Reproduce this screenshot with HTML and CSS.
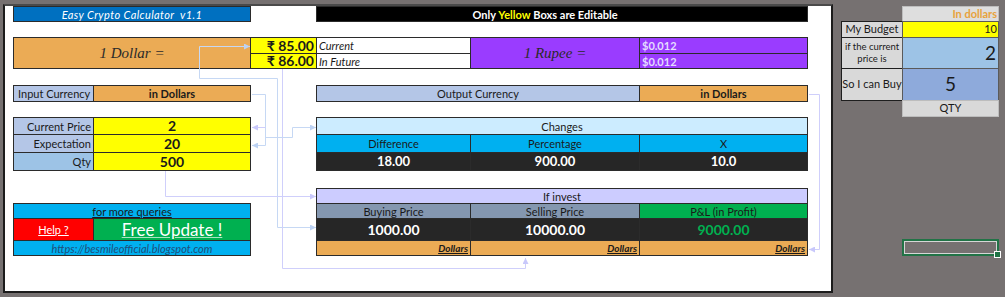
FILE: index.html
```html
<!DOCTYPE html>
<html lang="en">
<head>
<meta charset="UTF-8">
<meta name="viewport" content="width=device-width, initial-scale=1.0">
<title>Easy Crypto Calculator</title>
<link rel="stylesheet" href="styles.css">
</head>
<body>
<div class="sheet">
    <!-- trace arrows drawn over the cells -->
    <svg class="arrows" width="1005" height="297" viewBox="0 0 1005 297">
        <defs>
            <marker id="headBlue" markerWidth="6" markerHeight="6" refX="6" refY="3" orient="auto" markerUnits="userSpaceOnUse">
                <path d="M0,0 L6,3 L0,6 z" fill="#bcd2f3"/>
            </marker>
            <marker id="headLav" markerWidth="6" markerHeight="6" refX="6" refY="3" orient="auto" markerUnits="userSpaceOnUse">
                <path d="M0,0 L6,3 L0,6 z" fill="#c8c8fb"/>
            </marker>
        </defs>
        <g fill="none" stroke-width="1">
            <path class="blue" d="M199.5 78.5 V46.5 H250" marker-end="url(#headBlue)"/>
            <path class="blue" d="M199.5 78.5 H277.5 V227.5 H316" marker-end="url(#headBlue)"/>
            <path class="lav" d="M282.5 69 V268.5 H525.5 V258" marker-end="url(#headLav)"/>
            <path class="lav" d="M165.5 171 V196.5 H316" marker-end="url(#headLav)"/>
            <path class="blue" d="M252 94.5 H265.5 V145.5 H252" marker-end="url(#headBlue)"/>
            <path class="lav" d="M265.5 127.5 H252" marker-end="url(#headLav)"/>
            <path class="blue" d="M265.5 137.5 H292.5 V127.5 H316" marker-end="url(#headBlue)"/>
            <path class="lav" d="M809 94.5 H819.5 V249.5 H809" marker-end="url(#headLav)"/>
        </g>
    </svg>

    <div class="band band-title">
        <div class="cell title">Easy Crypto Calculator&nbsp; v1.1</div>
        <div class="cell notice">Only&nbsp;<span class="yl">Yellow</span>&nbsp;Boxs are Editable</div>
    </div>

    <div class="band band-rate">
        <div class="cell dollar serif">1 Dollar =</div>
        <div class="cell rupee-now yellow big">₹ 85.00</div>
        <div class="cell rupee-later yellow big">₹ 86.00</div>
        <div class="cell note now">Current</div>
        <div class="cell note later">In Future</div>
        <div class="cell rupee serif">1 Rupee =</div>
        <div class="cell usd now">$0.012</div>
        <div class="cell usd later">$0.012</div>
    </div>

    <div class="band band-currency">
        <div class="cell in-label">Input Currency</div>
        <div class="cell in-value orange bold">in Dollars</div>
        <div class="cell out-label">Output Currency</div>
        <div class="cell out-value orange bold">in Dollars</div>
    </div>

    <div class="band band-calc">
        <div class="cell label r1">Current Price</div>
        <div class="cell value yellow r1">2</div>
        <div class="cell label r2">Expectation</div>
        <div class="cell value yellow r2">20</div>
        <div class="cell label qty r3">Qty</div>
        <div class="cell value yellow r3">500</div>

        <div class="cell changes-head">Changes</div>
        <div class="cell sub c4">Difference</div>
        <div class="cell sub c5">Percentage</div>
        <div class="cell sub c6">X</div>
        <div class="cell result c4">18.00</div>
        <div class="cell result c5">900.00</div>
        <div class="cell result c6">10.0</div>
    </div>

    <div class="band band-invest">
        <div class="cell queries">for more queries</div>
        <div class="cell help">Help ?</div>
        <div class="cell update">Free Update !</div>
        <div class="cell url">https://besmileofficial.blogspot.com</div>

        <div class="cell invest-head">If invest</div>
        <div class="cell col-head c4">Buying Price</div>
        <div class="cell col-head c5">Selling Price</div>
        <div class="cell col-head pl c6">P&amp;L (in Profit)</div>
        <div class="cell money c4">1000.00</div>
        <div class="cell money c5">10000.00</div>
        <div class="cell money profit c6">9000.00</div>
        <div class="cell unit c4">Dollars</div>
        <div class="cell unit c5">Dollars</div>
        <div class="cell unit c6">Dollars</div>
    </div>
</div>

<div class="side">
    <div class="budget">
        <div class="bcell b-head">In dollars</div>
        <div class="bcell b-label">My Budget</div>
        <div class="bcell b-val b-yellow">10</div>
        <div class="bcell b-label small">if the current<br>price is</div>
        <div class="bcell b-val b-price">2</div>
        <div class="bcell b-label">So I can Buy</div>
        <div class="bcell b-val b-qty">5</div>
        <div class="bcell b-foot">QTY</div>
    </div>
    <div class="selected"><span class="handle"></span></div>
</div>
</body>
</html>
```

FILE: styles.css
```css
body {
    margin: 0;
    height: 297px;
    overflow: hidden;
    display: flex;
    align-items: flex-start;
    background-color: #767171;
    font-family: Lato, "Noto Sans", sans-serif;
    font-size: 11px;
    color: #1a1a1a;
}

/* white worksheet area */
.sheet {
    position: relative;
    box-sizing: border-box;
    width: 830px;
    height: 289px;
    margin: 4px 0 0 3px;
    padding: 1px 0 0 9px;
    background-color: #fff;
    border: 2px solid #1c1c1c;
    border-top: 2px solid #4a4a4a;
}
.arrows {
    position: absolute;
    left: -5px;
    top: -6px;
    z-index: 2;
    pointer-events: none;
}
.arrows .blue { stroke: #c6d8f4; }
.arrows .lav { stroke: #cfcffb; }

.band {
    display: grid;
    grid-template-columns: 80px 157px 66px 154px 169px 168px;
}
.band-title { grid-template-rows: 15px; }
.band-rate { grid-template-rows: 16px 15px; margin-top: 16px; }
.band-currency { grid-template-rows: 16px; margin-top: 17px; }
.band-calc { grid-template-rows: 17px 18px 18px; margin-top: 16px; }
.band-invest { grid-template-rows: 15px 15px 22px 15px; margin-top: 18px; }

.cell {
    display: flex;
    align-items: center;
    justify-content: center;
    margin: -1px 0 0 -1px;
    border: 1px solid #2b2b2b;
    white-space: nowrap;
    overflow: hidden;
    line-height: 1;
}
.bold { font-weight: bold; }
.serif {
    font-family: "Liberation Serif", "DejaVu Serif", serif;
    font-style: italic;
    font-size: 15px;
    color: #2a2a2a;
}
.yellow { background-color: #ffff00; }
.orange { background-color: #ebab55; }
.big {
    font-size: 14px;
    font-weight: bold;
    justify-content: flex-end;
    padding-right: 2px;
}

/* title row */
.title {
    grid-column: 1 / 3;
    background-color: #0070c0;
    color: #fff;
    font-style: italic;
    letter-spacing: 0.4px;
}
.notice {
    grid-column: 4 / 7;
    background-color: #000;
    color: #fff;
    font-weight: bold;
    padding-right: 34px;
}
.yl { color: #ffff00; }

/* exchange rate rows */
.dollar {
    grid-column: 1 / 3;
    grid-row: 1 / 3;
    background-color: #ebab55;
}
.rupee-now { grid-column: 3; grid-row: 1; }
.rupee-later { grid-column: 3; grid-row: 2; }
.note {
    grid-column: 4;
    justify-content: flex-start;
    padding-left: 2px;
    font-style: italic;
    background-color: #fff;
}
.now { grid-row: 1; }
.later { grid-row: 2; }
.rupee {
    grid-column: 5;
    grid-row: 1 / 3;
    background-color: #9a3cff;
}
.usd {
    grid-column: 6;
    justify-content: flex-start;
    padding-left: 2px;
    background-color: #9a3cff;
    color: #e4dcff;
    font-weight: bold;
}

/* currency row */
.in-label {
    grid-column: 1;
    justify-content: flex-start;
    padding-left: 4px;
    background-color: #b4c6e7;
}
.in-value { grid-column: 2; }
.out-label {
    grid-column: 4 / 6;
    background-color: #b4c6e7;
}
.out-value { grid-column: 6; }

/* input values and changes */
.label {
    grid-column: 1;
    justify-content: flex-end;
    padding-right: 2px;
    background-color: #b4c6e7;
}
.label.qty { background-color: #9dc3e6; }
.value {
    grid-column: 2;
    font-size: 14px;
    font-weight: bold;
}
.r1 { grid-row: 1; }
.r2 { grid-row: 2; }
.r3 { grid-row: 3; }
.c4 { grid-column: 4; }
.c5 { grid-column: 5; }
.c6 { grid-column: 6; }
.changes-head {
    grid-column: 4 / 7;
    grid-row: 1;
    background-color: #ccecff;
}
.sub {
    grid-row: 2;
    background-color: #00b0f0;
}
.result {
    grid-row: 3;
    background-color: #262626;
    color: #fff;
    font-size: 13px;
    font-weight: bold;
}

/* contact box */
.queries {
    grid-column: 1 / 3;
    grid-row: 2;
    background-color: #00b0f0;
    text-decoration: underline;
}
.help {
    grid-column: 1;
    grid-row: 3;
    background-color: #ff0000;
    color: #fff;
    text-decoration: underline;
}
.update {
    grid-column: 2;
    grid-row: 3;
    background-color: #00b050;
    color: #fff;
    font-size: 17px;
    text-decoration: underline;
    text-decoration-color: #a9e2c0;
}
.url {
    grid-column: 1 / 3;
    grid-row: 4;
    background-color: #00b0f0;
    color: #1f4e79;
    font-style: italic;
}

/* investment table */
.invest-head {
    grid-column: 4 / 7;
    grid-row: 1;
    background-color: #ccccff;
}
.col-head {
    grid-row: 2;
    background-color: #8497b0;
}
.col-head.pl { background-color: #00b050; }
.money {
    grid-row: 3;
    background-color: #262626;
    color: #fff;
    font-size: 14px;
    font-weight: bold;
}
.money.profit { color: #00b050; }
.unit {
    grid-row: 4;
    justify-content: flex-end;
    padding-right: 2px;
    background-color: #ebab55;
    font-size: 10px;
    font-weight: bold;
    font-style: italic;
    text-decoration: underline;
}

/* budget helper on the grey area */
.side {
    margin: 7px 0 0 9px;
    display: flex;
    flex-direction: column;
}
.budget {
    display: grid;
    grid-template-columns: 61px 96px;
    grid-template-rows: 15px 16px 31px 32px 16px;
}
.bcell {
    display: flex;
    align-items: center;
    justify-content: center;
    margin: -1px 0 0 -1px;
    border: 1px solid #3a3a3a;
    line-height: 1.3;
    text-align: center;
    white-space: nowrap;
    overflow: hidden;
}
.b-head {
    grid-column: 2;
    justify-content: flex-end;
    padding-right: 1px;
    background-color: #dedede;
    border-color: #bdbdbd;
    color: #e8a23c;
    font-weight: bold;
}
.b-label {
    grid-column: 1;
    background-color: #d9d9d9;
    border-color: #1e1e1e;
    font-size: 11px;
}
.b-label.small { font-size: 9.5px; }
.b-val {
    grid-column: 2;
    border-color: #5a5a5a;
}
.b-yellow {
    background-color: #ffff00;
    justify-content: flex-end;
    padding-right: 1px;
}
.b-price {
    background-color: #9dc3e6;
    justify-content: flex-end;
    padding-right: 2px;
    font-size: 19px;
}
.b-qty {
    background-color: #8eaadb;
    font-size: 19px;
}
.b-foot {
    grid-column: 2;
    background-color: #d9d9d9;
    border-color: #bdbdbd;
}
.selected {
    position: relative;
    box-sizing: border-box;
    width: 97px;
    height: 17px;
    margin: 122px 0 0 60px;
    border: 2px solid #217346;
    box-shadow: inset 0 0 0 1px #d6d6d6;
}
.handle {
    position: absolute;
    right: -4px;
    bottom: -4px;
    width: 5px;
    height: 5px;
    background-color: #217346;
    border: 1px solid #fff;
}
```
